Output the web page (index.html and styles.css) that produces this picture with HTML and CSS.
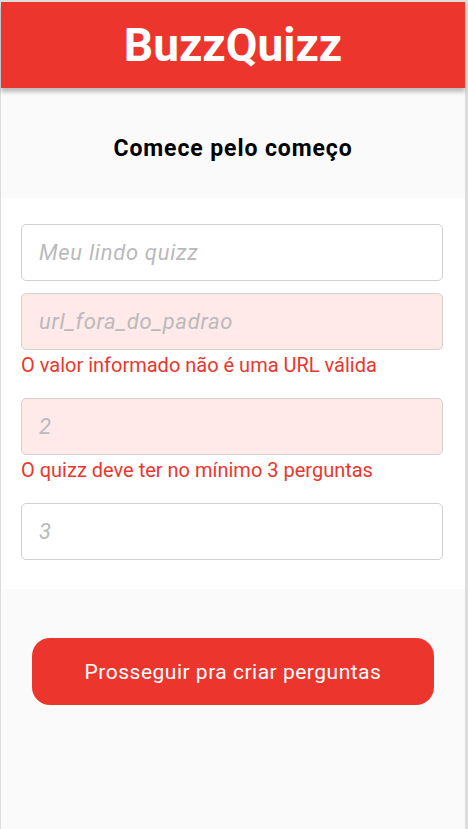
FILE: index.html
```html
<!DOCTYPE html>
<html lang="pt-BR">
<head>
<meta charset="utf-8">
<title>BuzzQuizz</title>
<link rel="stylesheet" href="styles.css">
</head>
<body>
<div class="app">
  <header class="topbar"><h1 class="logo">BuzzQuizz</h1></header>
  <div class="heading"><h2>Comece pelo começo</h2></div>
  <form class="form">
    <div class="field"><input class="input" type="text" placeholder="Meu lindo quizz"></div>
    <div class="field">
      <input class="input invalid" type="text" placeholder="url_fora_do_padrao">
      <p class="error">O valor informado não é uma URL válida</p>
    </div>
    <div class="field">
      <input class="input invalid" type="text" placeholder="2">
      <p class="error">O quizz deve ter no mínimo 3 perguntas</p>
    </div>
    <div class="field"><input class="input" type="text" placeholder="3"></div>
  </form>
  <div class="actions"><button class="btn" type="button">Prosseguir pra criar perguntas</button></div>
</div>
</body>
</html>
```
FILE: styles.css
```css
* { box-sizing: border-box; }
html, body { margin: 0; padding: 0; height: 100%; }
body {
  background: #dcdcdc;
  font-family: Roboto, "Liberation Sans", sans-serif;
  padding: 2px 3px 0 1px;
}
.app {
  background: #fafafa;
  min-height: 100%;
  display: flex;
  flex-direction: column;
}
.topbar {
  background: #ec362d;
  height: 86px;
  display: flex;
  align-items: center;
  justify-content: center;
  box-shadow: 0 4px 4px rgba(0,0,0,0.25);
  position: relative;
  z-index: 1;
}
.logo {
  margin: 0;
  color: #fff;
  font-size: 46px;
  font-weight: 700;
}
.heading {
  height: 110px;
  padding-top: 10px;
  display: flex;
  align-items: center;
  justify-content: center;
}
.heading h2 {
  margin: 0;
  font-size: 23px;
  letter-spacing: 0.9px;
  font-weight: 700;
  color: #000;
}
.form {
  background: #fff;
  padding: 26px 22px 29px 20px;
  display: flex;
  flex-direction: column;
  gap: 12px;
}
.field { display: flex; flex-direction: column; }
.input {
  height: 57px;
  border: 1px solid #d1d1d1;
  border-radius: 5px;
  background: #fff;
  padding: 0 17px;
  font-family: Roboto, "Liberation Sans", sans-serif;
  font-size: 22px;
  letter-spacing: 0.7px;
  font-style: italic;
  outline: none;
}
.input::placeholder { color: #bababa; font-style: italic; }
.input.invalid { background: #ffe9e9; }
.error {
  margin: 4px 0 10px;
  color: #ec362d;
  font-size: 20px;
  line-height: 22px;
}
.actions {
  padding-top: 49px;
  display: flex;
  justify-content: center;
}
.btn {
  width: 402px;
  height: 67px;
  border: none;
  border-radius: 18px;
  background: #ec362d;
  color: #fff;
  font-family: Roboto, "Liberation Sans", sans-serif;
  font-size: 21px;
  letter-spacing: 0.5px;
  cursor: pointer;
}
```
